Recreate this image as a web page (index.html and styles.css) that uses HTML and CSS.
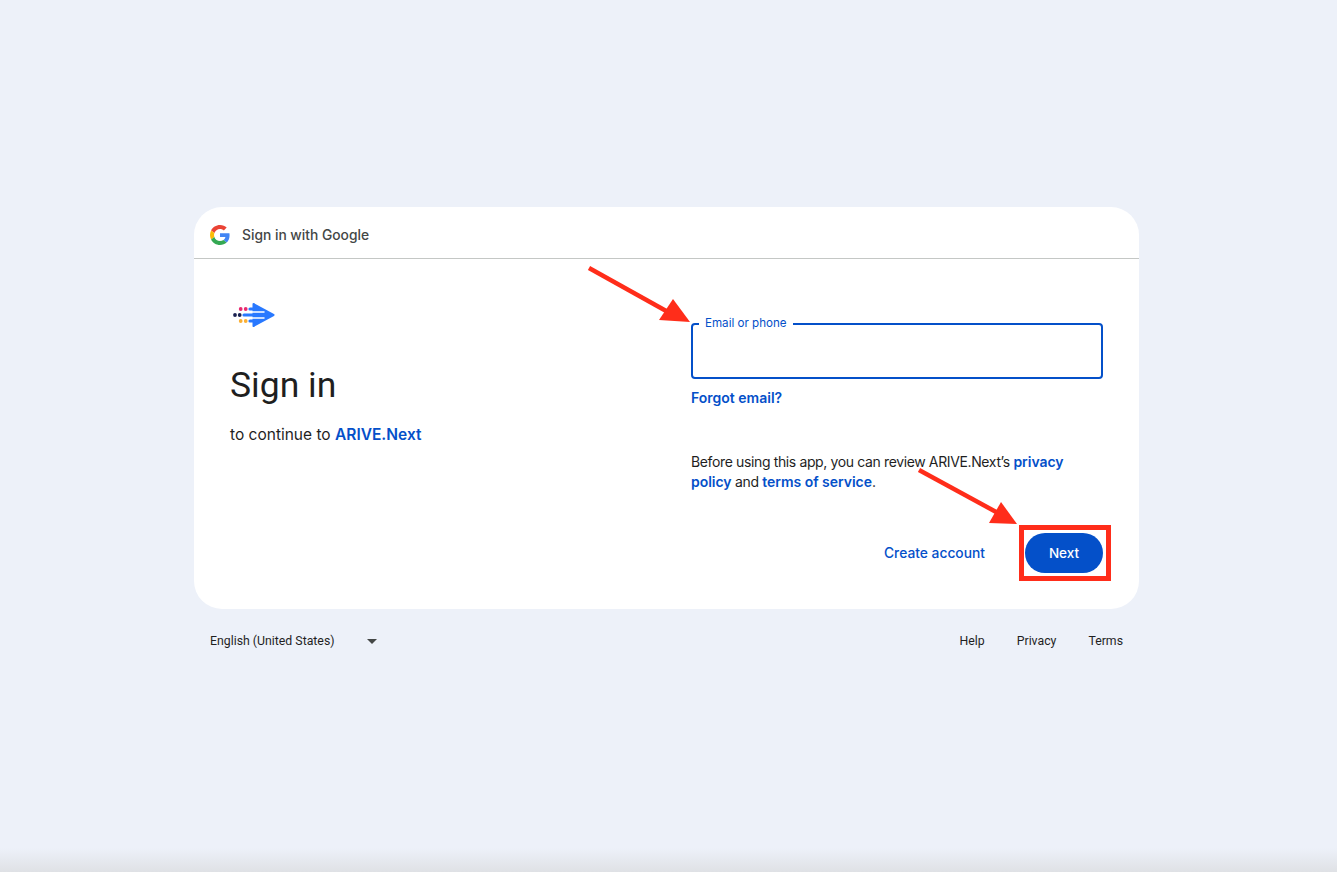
FILE: index.html
```html
<!DOCTYPE html>
<html>
    <head>
        <title>Sign in - Google Accounts</title>
        <meta charset="utf-8">
        <link rel="stylesheet" href="styles.css">
    </head>
    <body>
        <main class="page">
            <section class="card">
                <header class="card-head">
                    <svg class="g-logo" viewBox="0 0 48 48" width="20" height="20">
                        <path fill="#EA4335" d="M24 9.5c3.54 0 6.71 1.22 9.21 3.6l6.85-6.85C35.9 2.38 30.47 0 24 0 14.62 0 6.51 5.38 2.56 13.22l7.98 6.19C12.43 13.72 17.74 9.5 24 9.5z"/>
                        <path fill="#4285F4" d="M46.98 24.55c0-1.57-.15-3.09-.38-4.55H24v9.02h12.94c-.58 2.96-2.26 5.48-4.78 7.18l7.73 6c4.51-4.18 7.09-10.36 7.09-17.65z"/>
                        <path fill="#FBBC05" d="M10.53 28.59c-.48-1.45-.76-2.99-.76-4.59s.27-3.14.76-4.59l-7.98-6.19C.92 16.46 0 20.12 0 24c0 3.88.92 7.54 2.56 10.78l7.97-6.19z"/>
                        <path fill="#34A853" d="M24 48c6.48 0 11.93-2.13 15.89-5.81l-7.73-6c-2.15 1.45-4.92 2.3-8.16 2.3-6.26 0-11.57-4.22-13.47-9.91l-7.98 6.19C6.51 42.62 14.62 48 24 48z"/>
                    </svg>
                    <span class="head-title">Sign in with Google</span>
                </header>
                <div class="card-body">
                    <div class="intro">
                        <svg class="app-logo" viewBox="0 0 42 26" width="42" height="26">
                            <path fill="#2979ff" stroke="#2979ff" stroke-width="2" stroke-linejoin="round" d="M20.500 2 L40.500 13 L20.500 24 Z"/>
                            <path fill="none" stroke="#2979ff" stroke-width="3.200" stroke-linecap="round" d="M17 7 H24 M11 13 H24 M17 19 H24"/>
                            <path fill="none" stroke="#fff" stroke-width="1.500" stroke-linecap="round" d="M16 10 H31 M16 16 H31"/>
                            <circle cx="7.700" cy="7" r="1.900" fill="#e8286f"/>
                            <circle cx="12.700" cy="7" r="1.900" fill="#e8286f"/>
                            <circle cx="2" cy="13" r="1.900" fill="#1a2050"/>
                            <circle cx="6.700" cy="13" r="1.900" fill="#1a2050"/>
                            <circle cx="7.700" cy="19" r="1.900" fill="#fbb034"/>
                            <circle cx="12.700" cy="19" r="1.900" fill="#fbb034"/>
                        </svg>
                        <h1 class="title">Sign in</h1>
                        <p class="subtitle">to continue to <a class="link">ARIVE.Next</a></p>
                    </div>
                    <div class="form">
                        <div class="field">
                            <span class="field-label">Email or phone</span>
                        </div>
                        <a class="link forgot">Forgot email?</a>
                        <p class="notice">Before using this app, you can review ARIVE.Next’s <a class="link">privacy policy</a> and <a class="link">terms of service</a>.</p>
                        <div class="actions">
                            <a class="create">Create account</a>
                            <button class="next">Next</button>
                        </div>
                    </div>
                </div>
            </section>
            <footer class="foot">
                <div class="lang">
                    <span>English (United States)</span>
                    <span class="caret"></span>
                </div>
                <nav class="foot-links">
                    <a>Help</a>
                    <a>Privacy</a>
                    <a>Terms</a>
                </nav>
            </footer>
        </main>

        <!-- annotations drawn on top of the screenshot -->
        <svg class="marks" viewBox="0 0 1337 872" width="1337" height="872">
            <line x1="589" y1="268" x2="668" y2="312" stroke="#ff2d1a" stroke-width="4.500"/>
            <polygon points="690,322 659,320 673,299" fill="#ff2d1a"/>
            <line x1="919" y1="470" x2="998" y2="513" stroke="#ff2d1a" stroke-width="4.500"/>
            <polygon points="1017,524 989,523 1001,502" fill="#ff2d1a"/>
            <rect x="1021.500" y="527.500" width="87" height="51" fill="none" stroke="#ff2d1a" stroke-width="5"/>
        </svg>
        <div class="bottom-shade"></div>
    </body>
</html>
```

FILE: styles.css
```css
html, body {
    margin: 0;
    height: 872px;
    overflow: hidden;
}
body {
    background-color: #edf1f9;
    font-family: Inter, "Liberation Sans", sans-serif;
    color: #1f1f1f;
}
a {
    cursor: pointer;
}
.page {
    width: 945px;
    margin-left: 194px;
    padding-top: 207px;
}
.card {
    height: 402px;
    background-color: #fff;
    border-radius: 28px;
}
.card-head {
    height: 52px;
    box-sizing: border-box;
    padding: 5px 0 0 16px;
    display: flex;
    align-items: center;
    gap: 12px;
    border-bottom: 1px solid #c4c7c5;
}
.head-title {
    font-size: 13.800px;
    font-weight: 500;
    color: #444746;
}
.card-body {
    display: grid;
    grid-template-columns: 461px 412px;
    padding: 43px 36px 0;
}
.app-logo {
    display: block;
    margin: 0 0 0 3px;
}
.title {
    margin: 35px 0 0;
    font-family: Roboto, sans-serif;
    font-size: 35.500px;
    line-height: 44px;
    font-weight: 400;
    color: #1f1f1f;
}
.subtitle {
    margin: 16px 0 0;
    font-size: 15.500px;
    line-height: 24px;
}
.link {
    color: #0450c9;
    font-weight: 600;
}
.form {
    padding-top: 21px;
}
.field {
    height: 56px;
    box-sizing: border-box;
    border: 2px solid #0450c9;
    border-radius: 4px;
    position: relative;
}
.field-label {
    position: absolute;
    left: 6px;
    top: -10px;
    padding: 0 6px;
    background-color: #fff;
    font-size: 11.600px;
    line-height: 16px;
    color: #0450c9;
}
.forgot {
    display: block;
    margin-top: 9px;
    font-size: 14px;
    line-height: 20px;
}
.notice {
    margin: 44px 0 0;
    font-size: 14px;
    line-height: 20px;
    letter-spacing: -0.370px;
    color: #1f1f1f;
}
.notice .link {
    letter-spacing: -0.030px;
}
.actions {
    display: flex;
    justify-content: flex-end;
    align-items: center;
    gap: 40px;
    margin-top: 41px;
}
.create {
    font-size: 13.800px;
    font-weight: 500;
    color: #0450c9;
}
.next {
    width: 78px;
    height: 40px;
    border: none;
    border-radius: 20px;
    background-color: #0450c9;
    color: #fff;
    font-family: inherit;
    font-size: 13.500px;
    font-weight: 500;
}
.foot {
    display: flex;
    justify-content: space-between;
    align-items: center;
    height: 64px;
    padding: 0 16px;
    font-family: Roboto, sans-serif;
    font-size: 12.300px;
    color: #1f1f1f;
}
.lang {
    display: flex;
    align-items: center;
    gap: 32px;
}
.caret {
    border-left: 5px solid transparent;
    border-right: 5px solid transparent;
    border-top: 5px solid #444746;
}
.foot-links {
    display: flex;
    gap: 32px;
}
.marks {
    position: absolute;
    left: 0;
    top: 0;
    pointer-events: none;
}
.bottom-shade {
    position: absolute;
    left: 0;
    right: 0;
    bottom: 0;
    height: 24px;
    background: linear-gradient(rgba(220, 222, 226, 0), #dfe1e5);
}
```
